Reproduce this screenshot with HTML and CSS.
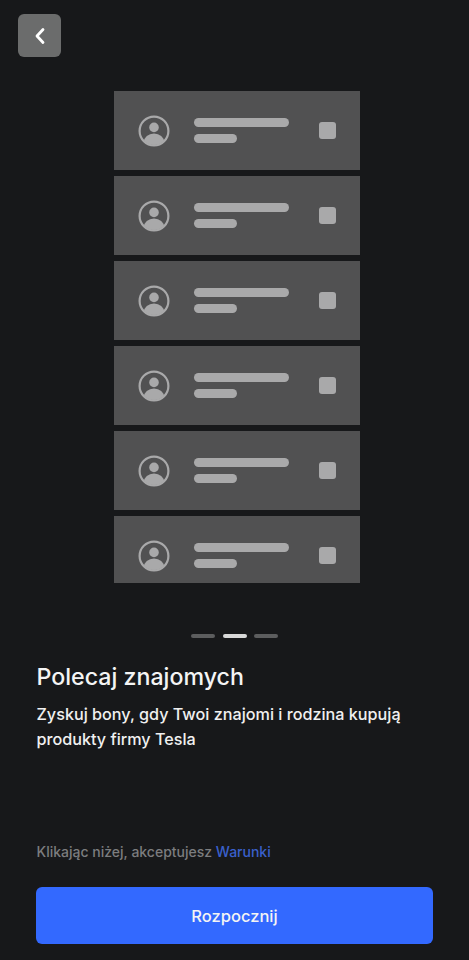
FILE: index.html
```html
<!DOCTYPE html>
<html lang="pl">
<head>
<meta charset="utf-8">
<title>Polecaj znajomych</title>
<link rel="stylesheet" href="styles.css">
</head>
<body>
<main class="page">
  <header class="top">
    <button class="back" aria-label="Wstecz">
      <svg width="12" height="18" viewBox="0 0 12 18"><path d="M9 2.5 L3 9 L9 15.5" fill="none" stroke="#fff" stroke-width="2.8" stroke-linecap="round" stroke-linejoin="round"/></svg>
    </button>
  </header>
  <section class="list">
    <div class="row">
      <svg class="avatar" viewBox="0 0 32 32"><defs><clipPath id="c"><circle cx="16" cy="16" r="14"/></clipPath></defs><circle cx="16" cy="16" r="14.4" fill="none" stroke="#a9a9aa" stroke-width="2.2"/><circle cx="16" cy="12.4" r="4.8" fill="#a9a9aa"/><ellipse cx="16" cy="27" rx="10.2" ry="8.6" fill="#a9a9aa" clip-path="url(#c)"/></svg>
      <div class="lines"><span class="line long"></span><span class="line short"></span></div>
      <span class="check"></span>
    </div>
    <div class="row">
      <svg class="avatar" viewBox="0 0 32 32"><circle cx="16" cy="16" r="14.4" fill="none" stroke="#a9a9aa" stroke-width="2.2"/><circle cx="16" cy="12.4" r="4.8" fill="#a9a9aa"/><ellipse cx="16" cy="27" rx="10.2" ry="8.6" fill="#a9a9aa" clip-path="url(#c)"/></svg>
      <div class="lines"><span class="line long"></span><span class="line short"></span></div>
      <span class="check"></span>
    </div>
    <div class="row">
      <svg class="avatar" viewBox="0 0 32 32"><circle cx="16" cy="16" r="14.4" fill="none" stroke="#a9a9aa" stroke-width="2.2"/><circle cx="16" cy="12.4" r="4.8" fill="#a9a9aa"/><ellipse cx="16" cy="27" rx="10.2" ry="8.6" fill="#a9a9aa" clip-path="url(#c)"/></svg>
      <div class="lines"><span class="line long"></span><span class="line short"></span></div>
      <span class="check"></span>
    </div>
    <div class="row">
      <svg class="avatar" viewBox="0 0 32 32"><circle cx="16" cy="16" r="14.4" fill="none" stroke="#a9a9aa" stroke-width="2.2"/><circle cx="16" cy="12.4" r="4.8" fill="#a9a9aa"/><ellipse cx="16" cy="27" rx="10.2" ry="8.6" fill="#a9a9aa" clip-path="url(#c)"/></svg>
      <div class="lines"><span class="line long"></span><span class="line short"></span></div>
      <span class="check"></span>
    </div>
    <div class="row">
      <svg class="avatar" viewBox="0 0 32 32"><circle cx="16" cy="16" r="14.4" fill="none" stroke="#a9a9aa" stroke-width="2.2"/><circle cx="16" cy="12.4" r="4.8" fill="#a9a9aa"/><ellipse cx="16" cy="27" rx="10.2" ry="8.6" fill="#a9a9aa" clip-path="url(#c)"/></svg>
      <div class="lines"><span class="line long"></span><span class="line short"></span></div>
      <span class="check"></span>
    </div>
    <div class="row row-last">
      <svg class="avatar" viewBox="0 0 32 32"><circle cx="16" cy="16" r="14.4" fill="none" stroke="#a9a9aa" stroke-width="2.2"/><circle cx="16" cy="12.4" r="4.8" fill="#a9a9aa"/><ellipse cx="16" cy="27" rx="10.2" ry="8.6" fill="#a9a9aa" clip-path="url(#c)"/></svg>
      <div class="lines"><span class="line long"></span><span class="line short"></span></div>
      <span class="check"></span>
    </div>
  </section>
  <div class="dots"><span class="dot"></span><span class="dot active"></span><span class="dot"></span></div>
  <section class="copy">
    <h1>Polecaj znajomych</h1>
    <p>Zyskuj bony, gdy Twoi znajomi i rodzina kupują produkty firmy Tesla</p>
  </section>
  <footer class="foot">
    <p class="terms">Klikając niżej, akceptujesz <a href="#">Warunki</a></p>
    <button class="cta">Rozpocznij</button>
  </footer>
</main>
</body>
</html>
```
FILE: styles.css
```css
* { box-sizing: border-box; }
html, body { margin: 0; height: 100%; }
body { background: #17181a; font-family: Inter, "Liberation Sans", sans-serif; color: #f4f4f4; }
.page { height: 960px; display: flex; flex-direction: column; overflow: hidden; }
.top { padding: 14px 0 0 18px; height: 91px; }
.back { width: 43px; height: 43px; padding: 0; border: 0; border-radius: 6px; background: #6b6c6c; display: flex; align-items: center; justify-content: center; }
.list { width: 246px; margin-left: 114px; display: flex; flex-direction: column; gap: 6px; }
.row { height: 79px; background: #515152; display: flex; align-items: center; padding: 0 24px 0 24px; flex: none; }
.row-last { height: 67px; padding-top: 12px; align-items: flex-start; }
.row-last .avatar { margin-top: 12px; }
.row-last .lines { margin-top: 15px; }
.row-last .check { margin-top: 19px; }
.avatar { width: 32px; height: 32px; flex: none; }
.lines { margin-left: 24px; width: 95px; display: flex; flex-direction: column; gap: 7px; }
.line { display: block; height: 9px; border-radius: 5px; background: #a9a9aa; }
.long { width: 95px; }
.short { width: 43px; }
.check { width: 17px; height: 17px; border-radius: 3px; background: #a9a9aa; margin-left: auto; }
.dots { display: flex; gap: 7.5px; margin: 51px 0 0 191px; }
.dot { width: 24px; height: 4px; border-radius: 2px; background: #5c5d5e; }
.dot.active { background: #d8d8d8; }
.copy { padding: 0 36.5px; margin-top: 24px; }
h1 { margin: 0; font-size: 23.2px; line-height: 30px; font-weight: 500; color: #f4f4f4; }
.copy p { margin: 10px 0 0; font-size: 16.2px; line-height: 25px; font-weight: 550; color: #f0f0f0; }
.foot { margin-top: auto; padding: 0 36px 16px 36px; }
.terms { margin: 0 0 25px .5px; font-size: 14px; line-height: 20px; font-weight: 500; color: #7c7d7f; }
.terms a { color: #3a60cc; text-decoration: none; }
.cta { display: block; width: 397px; height: 57px; border: 0; border-radius: 6px; background: #3369ff; color: #f4f4f4; font: 500 16.5px Inter, "Liberation Sans", sans-serif; }
```
